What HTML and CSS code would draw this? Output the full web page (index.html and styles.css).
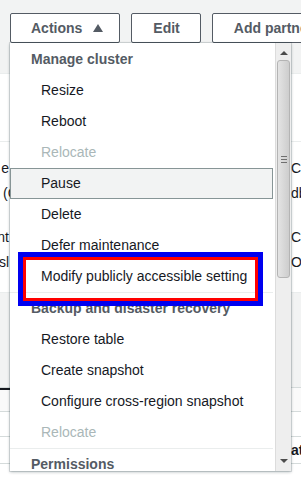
FILE: index.html
```html
<!DOCTYPE html>
<html lang="en">
<head>
  <meta charset="UTF-8" />
  <meta name="viewport" content="width=device-width, initial-scale=1.0"/>
  <title>Cluster actions</title>
  <link rel="stylesheet" href="styles.css">
</head>
<body>
  <div class="page">
    <div class="toolbar">
      <button class="btn btn-actions">Actions <span class="caret"></span></button>
      <button class="btn">Edit</button>
      <button class="btn">Add partner integration</button>
    </div>

    <div class="summary"></div>

    <div class="details">
      <div class="col col-left">
        <div class="line end">e</div>
        <div class="line start">(C</div>
        <div class="line end gap">nt</div>
        <div class="line end">sl</div>
      </div>
      <div class="col col-right">
        <div class="line">CU</div>
        <div class="line">db</div>
        <div class="line gap">C</div>
        <div class="line">Or</div>
      </div>
    </div>

    <div class="band"></div>

    <div class="tabs">
      <div class="tab active"></div>
    </div>

    <div class="table">
      <div class="row"></div>
      <div class="row"><span class="cell-right">at</span></div>
      <div class="row last"></div>
    </div>
  </div>

  <!-- menu opened from the Actions button -->
  <div class="menu">
    <div class="menu-list">
      <div class="group">
        <div class="menu-header">Manage cluster</div>
        <div class="menu-item">Resize</div>
        <div class="menu-item">Reboot</div>
        <div class="menu-item disabled">Relocate</div>
        <div class="menu-item hover">Pause</div>
        <div class="menu-item">Delete</div>
        <div class="menu-item">Defer maintenance</div>
        <div class="menu-item">Modify publicly accessible setting</div>
      </div>
      <div class="group">
        <div class="menu-header">Backup and disaster recovery</div>
        <div class="menu-item">Restore table</div>
        <div class="menu-item">Create snapshot</div>
        <div class="menu-item">Configure cross-region snapshot</div>
        <div class="menu-item disabled">Relocate</div>
      </div>
      <div class="group">
        <div class="menu-header">Permissions</div>
      </div>
    </div>
    <div class="scrollbar">
      <div class="arrow up"></div>
      <div class="thumb"><span class="grip"></span></div>
      <div class="track"></div>
      <div class="arrow down"></div>
    </div>
  </div>

  <div class="callout"></div>
</body>
</html>
```

FILE: styles.css
```css
body {
  font-family: 'Liberation Sans', Arial, sans-serif;
  font-size: 14px;
  color: #16191f;
  margin: 0;
  background-color: #ffffff;
  overflow: hidden;
}

.page {
  width: 301px;
  height: 480px;
  overflow: hidden;
}

.toolbar {
  box-sizing: border-box;
  height: 74px;
  padding: 13px 0 0 10px;
  display: flex;
  gap: 11px;
  background-color: #f2f3f3;
  border-bottom: 1px solid #eaeded;
  white-space: nowrap;
}

.btn {
  box-sizing: border-box;
  height: 30px;
  padding: 0 20px;
  border: 1px solid #545b64;
  border-radius: 2px;
  background-color: #ffffff;
  color: #545b64;
  font-family: inherit;
  font-size: 14px;
  font-weight: bold;
  display: flex;
  align-items: center;
  flex-shrink: 0;
}

.btn-actions {
  padding-right: 16px;
}

.btn + .btn {
  padding-left: 21px;
}

.caret {
  display: inline-block;
  margin-left: 11px;
  width: 0;
  height: 0;
  border-left: 5px solid transparent;
  border-right: 5px solid transparent;
  border-bottom: 8px solid #545b64;
}

.summary {
  height: 67px;
  border-bottom: 1px solid #eaeded;
}

.details {
  box-sizing: border-box;
  height: 151px;
  padding-top: 16px;
  display: flex;
  justify-content: space-between;
  border-bottom: 1px solid #eaeded;
}

.col {
  display: flex;
  flex-direction: column;
  gap: 5px;
  white-space: nowrap;
}

.col-left {
  width: 9px;
}

.col-right {
  width: 10px;
  padding-left: 1px;
}

.line {
  line-height: 20px;
}

.line.gap {
  margin-top: 19px;
}

.line.end {
  align-self: flex-end;
}

.line.start {
  align-self: flex-start;
  margin-left: 3px;
}

.band {
  height: 94px;
  background-color: #f2f3f3;
}

.tabs {
  height: 23px;
  border-top: 1px solid #d5dbdb;
  border-bottom: 1px solid #d5dbdb;
  background-color: #fafafa;
}

.tab.active {
  width: 12px;
  height: 2px;
  background-color: #16191f;
}

.row {
  box-sizing: border-box;
  height: 25px;
  border-bottom: 1px solid #d5dbdb;
  display: flex;
  justify-content: flex-end;
  align-items: center;
}

.row:nth-child(2) {
  height: 27px;
}

.cell-right {
  width: 10px;
  font-weight: bold;
  white-space: nowrap;
}

/* dropdown */

.menu {
  position: absolute;
  left: 10px;
  top: 43px;
  width: 281px;
  height: 428px;
  display: flex;
  background-color: #ffffff;
  box-shadow: 0 0 0 1px rgba(0, 28, 36, 0.12), 0 1px 3px rgba(0, 28, 36, 0.3);
  overflow: hidden;
}

.menu-list {
  box-sizing: border-box;
  width: 265px;
  padding: 1px 2px 0 0;
}

.group + .group {
  border-top: 1px solid #eaeded;
}

.menu-header,
.menu-item {
  border: 1px solid transparent;
  line-height: 29px;
  white-space: nowrap;
}

.menu-header {
  padding-left: 20px;
  font-weight: bold;
  color: #545b64;
}

.menu-item {
  padding-left: 30px;
  color: #16191f;
}

.menu-item.disabled {
  color: #aab7b8;
}

.menu-item.hover {
  background-color: #f2f3f3;
  border-color: #879596;
}

.scrollbar {
  box-sizing: border-box;
  width: 16px;
  display: flex;
  flex-direction: column;
  align-items: center;
  background-color: #eeeeee;
  border-left: 1px solid #dcdcdc;
}

.arrow {
  width: 0;
  height: 0;
  border-left: 4px solid transparent;
  border-right: 4px solid transparent;
}

.arrow.up {
  margin: 8px 0 5px;
  border-bottom: 4px solid #4c4c4c;
}

.arrow.down {
  margin: 0 0 8px;
  border-top: 4px solid #4c4c4c;
}

.thumb {
  box-sizing: border-box;
  width: 13px;
  height: 218px;
  border: 1px solid #b4b4b4;
  border-radius: 3px;
  background: linear-gradient(to right, #e4e4e4, #cdcdcd);
  display: flex;
  align-items: center;
  justify-content: center;
}

.grip {
  width: 6px;
  height: 5px;
  border-top: 1px solid #6f6f6f;
  border-bottom: 1px solid #6f6f6f;
  background: linear-gradient(#6f6f6f, #6f6f6f) center / 100% 1px no-repeat;
  margin-top: -20px;
}

.track {
  flex: 1;
}

/* annotation box drawn over the menu */
.callout {
  position: absolute;
  left: 18px;
  top: 252px;
  width: 245px;
  height: 54px;
  box-sizing: border-box;
  border: 5px solid #0000f0;
  box-shadow: inset 0 0 0 3px #ff0000;
}
```
